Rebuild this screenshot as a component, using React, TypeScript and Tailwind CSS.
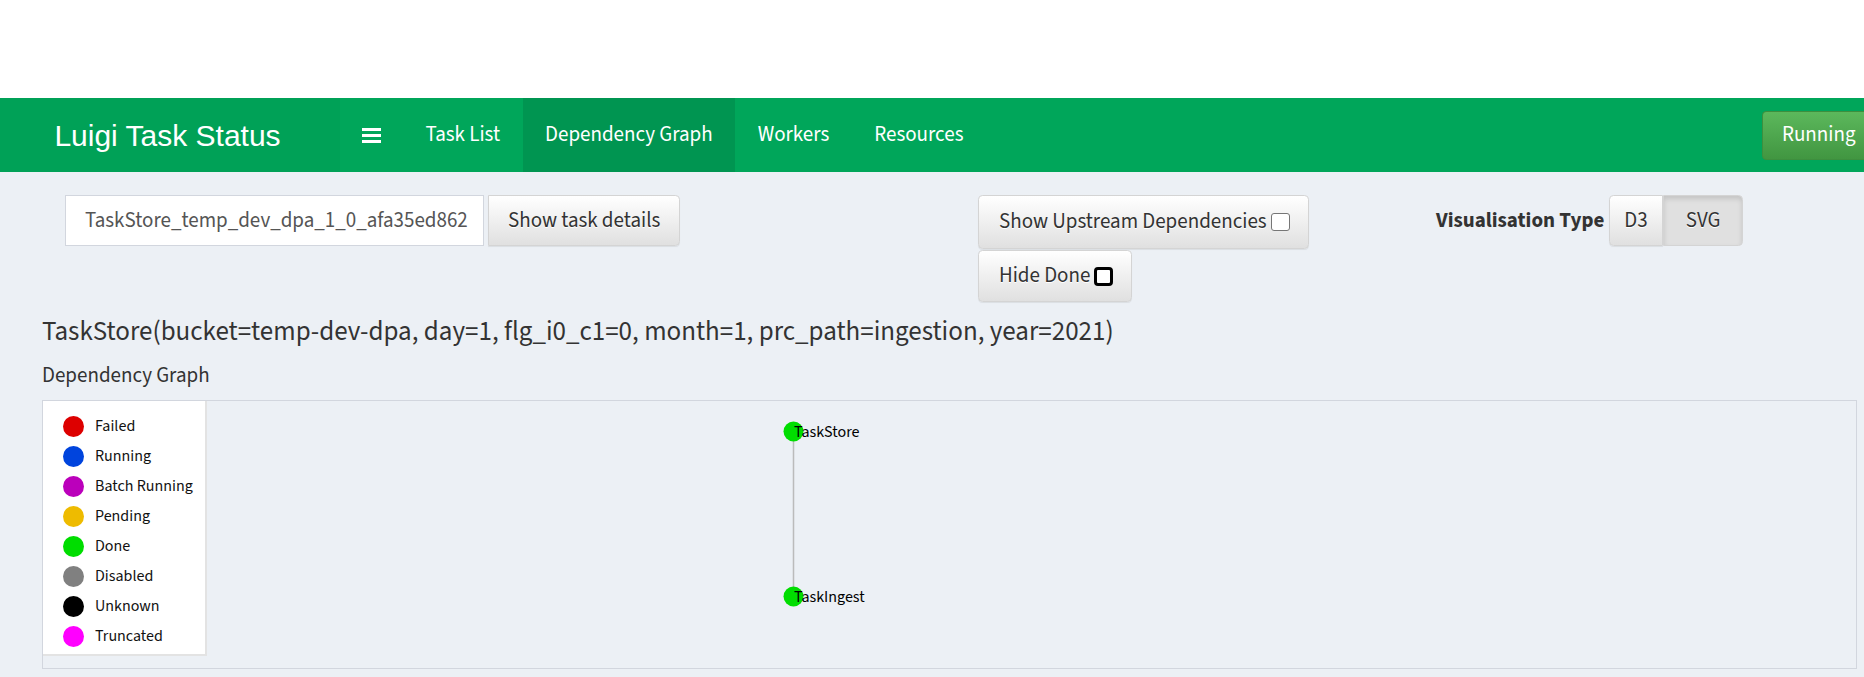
const legend = [
  { label: 'Failed', color: 'bg-[#dd0000]' },
  { label: 'Running', color: 'bg-[#0044dd]' },
  { label: 'Batch Running', color: 'bg-[#bb00bb]' },
  { label: 'Pending', color: 'bg-[#eebb00]' },
  { label: 'Done', color: 'bg-[#00dd00]' },
  { label: 'Disabled', color: 'bg-[#808080]' },
  { label: 'Unknown', color: 'bg-[#000000]' },
  { label: 'Truncated', color: 'bg-[#ff00ff]' },
];

const navLinks = ['Task List', 'Dependency Graph', 'Workers', 'Resources'];

const btn =
  'flex items-center border border-[#d4d4d4] bg-linear-to-b from-white to-[#e0e0e0] text-[#333] [text-shadow:0_1px_0_#fff] shadow-[inset_0_1px_0_rgba(255,255,255,0.15),0_1px_1px_rgba(0,0,0,0.075)]';

const Checkbox = ({ focused }: { focused?: boolean }) =>
  focused ? (
    <span className="ml-[4px] inline-block h-[19px] w-[19px] rounded-[4px] border-[3px] border-black bg-white" />
  ) : (
    <span className="ml-[4px] inline-block h-[18px] w-[19px] rounded-[3px] border border-[#767676] bg-white" />
  );

const Navbar = () => (
  <header className="flex h-[74px] bg-[#00a65a] text-white">
    <div className="flex w-[340px] shrink-0 items-center justify-center bg-[#00a157] pr-[5px] font-['Liberation_Sans',Arial,sans-serif] text-[30px]">
      Luigi Task Status
    </div>
    <nav className="flex flex-1 font-['Source_Sans_3',Lato,sans-serif] text-[21px]">
      <a className="flex items-center px-[22px]">
        <svg width="19" height="15" viewBox="0 0 19 15" fill="white">
          <rect x="0" y="0" width="19" height="3" />
          <rect x="0" y="6" width="19" height="3" />
          <rect x="0" y="12" width="19" height="3" />
        </svg>
      </a>
      {navLinks.map((l) => (
        <a
          key={l}
          className={`flex items-center px-[22.5px] ${l === 'Dependency Graph' ? 'bg-[#009551]' : ''}`}
        >
          {l}
        </a>
      ))}
      <div className="ml-auto flex items-center">
        <button className="flex h-[49px] w-[102px] items-center rounded-l-[4.5px] border border-r-0 border-[#3e8f3e] bg-linear-to-b from-[#5cb85c] to-[#419641] pl-[19px] text-[21px] text-white">
          Running
        </button>
      </div>
    </nav>
  </header>
);

const Controls = () => (
  <div className="flex pl-[65px] pt-[23px] font-['Source_Sans_3',Lato,sans-serif] text-[21px]">
    <div className="flex w-[913px] shrink-0 items-start">
      <div className="flex h-[51px] w-[419px] items-center border border-[#d2d6de] bg-white pl-[19px] text-[#555]">
        TaskStore_temp_dev_dpa_1_0_afa35ed862
      </div>
      <button className={`${btn} ml-[4px] h-[51px] rounded-r-[4.5px] px-[19px]`}>Show task details</button>
    </div>
    <div className="flex w-[458px] shrink-0 flex-col items-start gap-[1px]">
      <button className={`${btn} h-[54px] rounded-[4.5px] pl-[20px] pr-[18px]`}>
        Show Upstream Dependencies
        <Checkbox />
      </button>
      <button className={`${btn} h-[52px] rounded-[4.5px] pl-[20px] pr-[18px]`}>
        Hide Done
        <Checkbox focused />
      </button>
    </div>
    <div className="flex h-[51px] items-center">
      <span className="font-bold text-[#333]">Visualisation Type</span>
      <div className="ml-[5px] flex h-[51px]">
        <button className={`${btn} rounded-l-[4.5px] px-[14px]`}>D3</button>
        <button className="flex items-center rounded-r-[4.5px] border border-[#d4d4d4] bg-[#e0e0e0] px-[22px] text-[#333] shadow-[inset_0_3px_5px_rgba(0,0,0,0.125)] [text-shadow:0_1px_0_#fff]">
          SVG
        </button>
      </div>
    </div>
  </div>
);

const Legend = () => (
  <ul className="w-[164px] border-b-2 border-r-2 border-[#e3e3e3] bg-white pb-[3px] pt-[10px] font-['Source_Sans_3',Lato,sans-serif] text-[16px] text-[#111]">
    {legend.map((item) => (
      <li key={item.label} className="flex h-[30px] items-center pl-[20px]">
        <span className={`h-[21px] w-[21px] rounded-full ${item.color}`} />
        <span className="ml-[11px]">{item.label}</span>
      </li>
    ))}
  </ul>
);

const Graph = () => (
  <div className="relative mt-[10px] h-[269px] border border-[#d2d6de]">
    <Legend />
    <svg className="absolute inset-0" width="1813" height="267">
      <line x1="750.5" y1="30.5" x2="750.5" y2="195.5" stroke="#bbbbbb" strokeWidth="1.5" />
      <circle cx="750.5" cy="30.5" r="10" fill="#00dd00" />
      <circle cx="750.5" cy="195.5" r="10" fill="#00dd00" />
      <text x="751" y="35.5" fontSize="16" fill="#000" fontFamily="'Source Sans 3', Lato, sans-serif">
        TaskStore
      </text>
      <text x="751" y="200.5" fontSize="16" fill="#000" fontFamily="'Source Sans 3', Lato, sans-serif">
        TaskIngest
      </text>
    </svg>
  </div>
);

export default function App() {
  return (
    <div className="h-[677px] w-[1864px] overflow-hidden bg-white pt-[98px]">
      <Navbar />
      <main className="h-full bg-[#ecf0f5]">
        <Controls />
        <div className="pl-[42px] pr-[7px] font-['Source_Sans_3',Lato,sans-serif]">
          <h3 className="mt-[15px] text-[27px] leading-[30px] text-[#333]">
            TaskStore(bucket=temp-dev-dpa, day=1, flg_i0_c1=0, month=1, prc_path=ingestion, year=2021)
          </h3>
          <p className="mt-[13px] text-[21px] leading-[30px] text-[#333]">Dependency Graph</p>
          <Graph />
        </div>
      </main>
    </div>
  );
}
